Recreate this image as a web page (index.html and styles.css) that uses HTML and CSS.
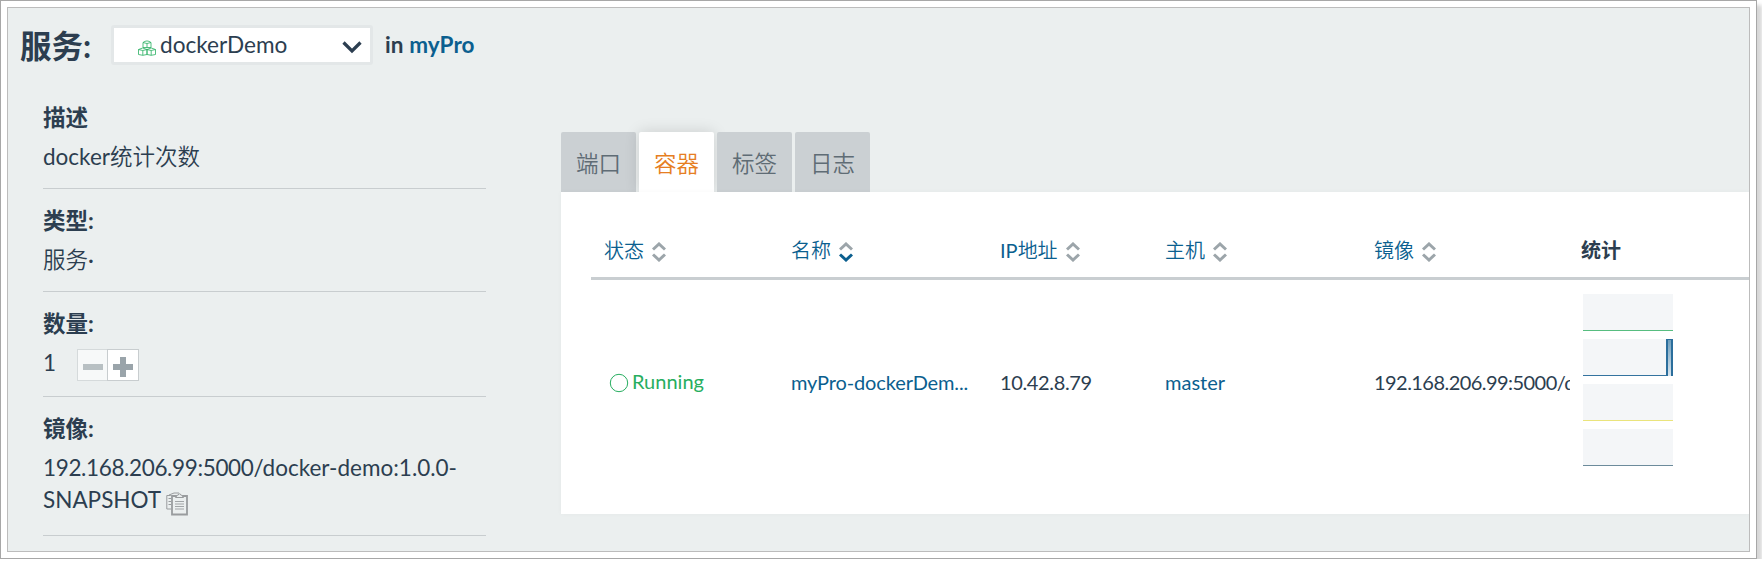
FILE: index.html
```html
<!DOCTYPE html>
<html lang="zh-CN">
<head>
<meta charset="utf-8">
<title>服务: dockerDemo</title>
<link rel="stylesheet" href="styles.css">
</head>
<body>
<div class="frame">
  <div class="page">
    <header class="header">
      <h1 class="title">服务:</h1>
      <div class="select">
        <svg class="cubes" viewBox="0 0 18 16" width="18" height="16"><g fill="none" stroke="#27ae60" stroke-width=".8"><path d="M5 2.500Q9-.6 13 2.500v5H5zM5 2.500q4 2 8 0M9 3.500v4"/><path d="M.5 9.500q4.200-3 8.500 0v5q-4.200 1.600-8.500 0zM.5 9.500q4.200 2 8.500 0M4.800 10.500v4.800"/><path d="M9 9.500q4.200-3 8.500 0v5q-4.200 1.600-8.500 0zM9 9.500q4.200 2 8.500 0M13.200 10.500v4.800"/></g></svg>
        <span class="select-name">dockerDemo</span>
        <svg class="chevron" viewBox="0 0 20 13" width="20" height="13"><path d="M1.500 1.500 10 10l8.500-8.500" fill="none" stroke="#2c3e50" stroke-width="3.200"/></svg>
      </div>
      <div class="stack">in <a class="link">myPro</a></div>
    </header>
    <div class="body">
      <aside class="sidebar">
        <section class="info description"><h2 class="label">描述</h2><p class="value">docker<span class="cjk">统计次数</span></p></section>
        <section class="info"><h2 class="label">类型:</h2><p class="value"><span class="cjk">服务</span>·</p></section>
        <section class="info scale-info"><h2 class="label">数量:</h2>
          <div class="scale"><span class="value count">1</span>
            <div class="buttons"><button class="btn disabled"><svg viewBox="0 0 20 20" width="20" height="20"><path d="M0 7h20v6H0z"/></svg></button><button class="btn"><svg viewBox="0 0 20 20" width="20" height="20"><path d="M7 0h6v7h7v6h-7v7H7v-7H0V7h7z"/></svg></button></div>
          </div></section>
        <section class="info image-info"><h2 class="label">镜像:</h2><p class="value"><span class="num">192.168.206.99:5000</span>/docker-demo:1.0.0-<br>SNAPSHOT <svg class="copy" viewBox="0 0 22 24" width="22" height="24"><g fill="none" stroke="#999c9e"><path d="M5 17H.8V3.500h4M3 3 8 1h5M2.500 6.500H5m-2.500 3H5m-2.500 3H5"/><path d="M6 4h15v18.500H6z" stroke-width="1.800"/><path d="M9.500 5.500h8L15.500 3h-.8a1.200 1.200 0 0 0-2.400 0h-.8z" fill="#ebefef"/><path d="M9 9.500h9M9 12h9m-9 2.500h9M9 17h9" stroke-width=".9"/></g></svg></p></section>
      </aside>
      <main class="main">
        <nav class="tabs"><a class="tab">端口</a><a class="tab active">容器</a><a class="tab">标签</a><a class="tab">日志</a></nav>
        <div class="panel">
          <div class="row head">
            <div class="cell"><span class="cjk">状态</span><svg class="sort" viewBox="0 0 14 20" width="14" height="20"><path d="M1 7.500l6-5.500 6 5.500"/><path d="M1 12.500l6 5.500 6-5.500"/></svg></div>
            <div class="cell"><span class="cjk">名称</span><svg class="sort" viewBox="0 0 14 20" width="14" height="20"><path d="M1 7.500l6-5.500 6 5.500"/><path class="on" d="M1 12.500l6 5.500 6-5.500"/></svg></div>
            <div class="cell">IP<span class="cjk">地址</span><svg class="sort" viewBox="0 0 14 20" width="14" height="20"><path d="M1 7.500l6-5.500 6 5.500"/><path d="M1 12.500l6 5.500 6-5.500"/></svg></div>
            <div class="cell"><span class="cjk">主机</span><svg class="sort" viewBox="0 0 14 20" width="14" height="20"><path d="M1 7.500l6-5.500 6 5.500"/><path d="M1 12.500l6 5.500 6-5.500"/></svg></div>
            <div class="cell"><span class="cjk">镜像</span><svg class="sort" viewBox="0 0 14 20" width="14" height="20"><path d="M1 7.500l6-5.500 6 5.500"/><path d="M1 12.500l6 5.500 6-5.500"/></svg></div>
            <div class="cell stats-head">统计</div>
          </div>
          <div class="row data">
            <div class="cell state"><svg class="ring" viewBox="0 0 20 20" width="20" height="20"><circle cx="10" cy="10" r="8.700"/></svg>Running</div>
            <div class="cell link name">myPro-dockerDem...</div>
            <div class="cell num">10.42.8.79</div>
            <div class="cell link">master</div>
            <div class="cell image">192.168.206.99:5000/docker-demo:1.0.0-SNAPSHOT</div>
            <div class="cell charts">
              <div class="chart cpu"></div>
              <div class="chart memory"><span class="spike"></span></div>
              <div class="chart network"></div>
              <div class="chart storage"></div>
            </div>
          </div>
        </div>
      </main>
    </div>
  </div>
</div>
</body>
</html>
```

FILE: styles.css
```css
* { box-sizing: border-box; }
body {
  margin: 0;
  background: #fff;
  color: #2c3e50;
  font-family: Lato, "Noto Sans CJK SC", sans-serif;
  overflow: hidden;
}
h1, h2, p { margin: 0; }
.frame {
  width: 1757px;
  height: 559px;
  padding: 6px;
  border: 1px solid #a7a7a7;
  background: #fff;
  box-shadow: 5px 5px 4px rgba(0, 0, 0, .16);
}
.page {
  height: 545px;
  border: 1px solid #bcbcbc;
  background: #ebefef;
  overflow: hidden;
}
.header {
  display: flex;
  align-items: flex-start;
  height: 88px;
  padding: 17px 0 0 12px;
}
.title {
  width: 91px;
  padding-top: 1px;
  font-size: 31.500px;
  line-height: 40px;
}
.select {
  display: flex;
  align-items: center;
  width: 262px;
  height: 40px;
  padding: 0 8px 0 24px;
  border: 3px solid #e3e7e8;
  border-radius: 3px;
  background: #fff;
}
.cubes { margin: 6px 4px 0 0; }
.select-name { margin-top: -1px; font-size: 22.600px; line-height: 34px; }
.chevron { margin: 4px 0 0 auto; }
.stack {
  margin-left: 12px;
  font-size: 22.500px;
  font-weight: 700;
  letter-spacing: .1px;
  line-height: 40px;
}
.link { color: #0b5f8f; }
.cjk { font-family: "Noto Sans CJK SC", sans-serif; font-weight: 350; line-height: 1; }
.body { display: flex; }
.sidebar { width: 443px; margin-left: 35px; }
.info {
  height: 103px;
  padding-top: 16px;
  border-bottom: 1px solid #c8cdcf;
}
.label {
  height: 32px;
  font-size: 22.500px;
  line-height: 32px;
}
.value {
  margin-top: 6px;
  font-size: 22.500px;
  font-weight: 400;
  line-height: 33px;
}
.num { letter-spacing: -.36px; }
.description { height: 93px; padding-top: 6px; }
.scale-info { height: 105px; }
.scale { display: flex; }
.count { width: 34px; }
.buttons { display: flex; height: 32px; margin-top: 9px; }
.btn {
  display: flex;
  align-items: center;
  justify-content: center;
  width: 32px;
  height: 32px;
  padding: 3px 0 0;
  border: 1px solid #c8cdcf;
  background: #fff;
}
.btn svg { fill: #9aa4aa; }
.btn.disabled { width: 30px; border-right: 0; border-color: #d5dadb; background: #f7f9f9; }
.btn.disabled svg { fill: #b8c0c3; }
.image-info { height: 139px; }
.image-info .value { line-height: 32px; margin-top: 7px; }
.copy { margin-left: 0; vertical-align: -8px; }
.main { width: 1188px; margin-left: 75px; padding-top: 36px; }
.tabs { display: flex; gap: 3px; height: 60px; }
.tab {
  width: 75px;
  border-radius: 2px 2px 0 0;
  background: #cbd0d3;
  color: #5f6c75;
  font-family: "Noto Sans CJK SC", sans-serif;
  font-size: 22.500px;
  font-weight: 350;
  line-height: 60px;
  text-align: center;
}
.tab.active {
  background: #fff;
  color: #e67e22;
  box-shadow: 0 0 15px rgba(0, 0, 0, .14);
}
.panel {
  position: relative;
  height: 322px;
  padding: 30px 0 0 30px;
  background: #fff;
  box-shadow: 0 0 5px rgba(0, 0, 0, .03);
}
.row {
  display: grid;
  grid-template-columns: 187px 209px 165px 209px 207px 1fr;
  padding-left: 13px;
  font-size: 20px;
}
.head {
  height: 58px;
  border-bottom: 3px solid #c9ced1;
  color: #0b5f8f;
  line-height: 57px;
}
.sort { margin-left: 8px; vertical-align: -4px; }
.sort path { fill: none; stroke: #9ca5aa; stroke-width: 3; }
.sort .on { stroke: #0b5f8f; }
.stats-head { color: #2c3e50; font-weight: 700; }
.data { height: 206px; line-height: 204px; }
.state { padding-left: 5px; color: #27ae60; line-height: 202px; }
.ring { margin-right: 3px; vertical-align: -4px; fill: none; stroke: #27ae60; stroke-width: 1; }
.name { letter-spacing: -.12px; }
.image { width: 196px; overflow: hidden; white-space: nowrap; letter-spacing: -.55px; }
.charts { display: grid; grid-auto-rows: 37px; gap: 8px; padding: 14px 0 0 2px; }
.chart { position: relative; width: 90px; background: #f4f6f8; border-bottom: 1px solid; }
.cpu { border-color: #57bd80; }
.memory { border-color: #34739f; }
.network { border-color: #eae47c; }
.storage { border-color: #6c8b9b; }
.spike {
  position: absolute;
  right: 0;
  top: 0;
  width: 7px;
  height: 37px;
  border: solid #2b6e9c;
  border-width: 1px 2px 0;
  background: linear-gradient(#6f9fbd, #dbe6ee);
}
```
